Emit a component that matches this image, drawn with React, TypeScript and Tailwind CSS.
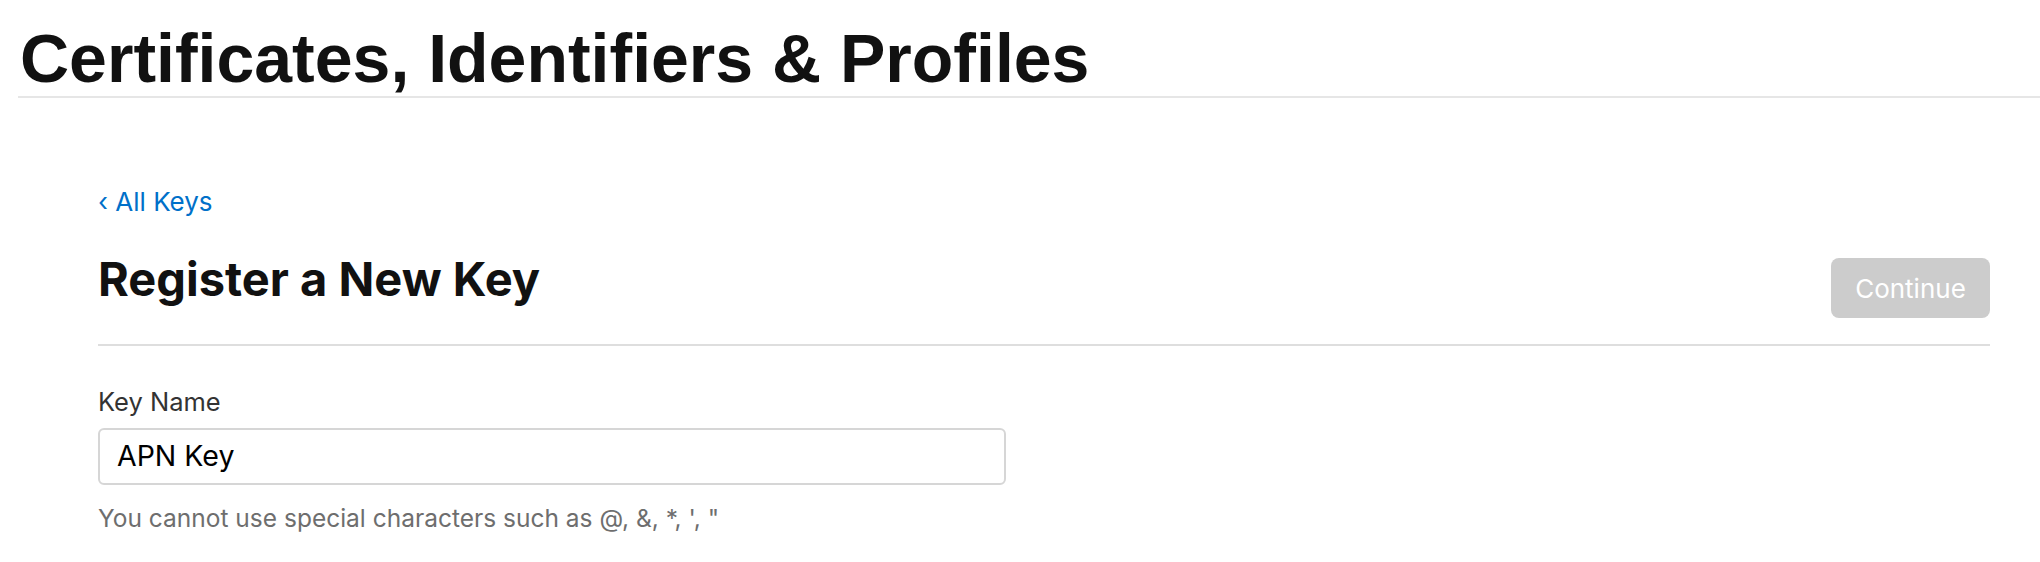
export default function App() {
  return (
    <div className="w-[2040px] h-[562px] bg-white overflow-hidden">
      <header className="pl-[18px]">
        <h1 className="pt-[24px] pl-[2px] text-[68px] leading-[68px] font-bold text-[#111111] font-['Liberation_Sans',Arial,sans-serif]">
          Certificates, Identifiers &amp; Profiles
        </h1>
        <div className="mt-[4px] h-[2px] bg-[#e6e6e6]" />
      </header>

      <main className="pl-[98px] pr-[50px] font-['Inter','Noto_Sans',sans-serif]">
        <a href="#" className="mt-[91px] block w-fit text-[26px] leading-[26px] text-[#0070c9]">
          ‹ All Keys
        </a>

        <div className="mt-[40px] flex items-start justify-between">
          <h2 className="text-[47px] leading-[47px] font-bold text-[#111111]">
            Register a New Key
          </h2>
          <button
            disabled
            className="mt-[3px] h-[60px] w-[159px] rounded-[8px] bg-[#cccccc] text-[26px] text-white"
          >
            Continue
          </button>
        </div>

        <div className="mt-[26px] h-[2px] bg-[#dedede]" />

        <label className="mt-[43px] block text-[25.5px] leading-[25px] text-[#333333]">
          Key Name
        </label>
        <div className="mt-[14px] flex h-[57px] w-[908px] items-center rounded-[6px] border-2 border-[#d6d6d6] pl-[17px] text-[28.5px] text-black">
          APN Key
        </div>
        <p className="mt-[21px] text-[24.5px] leading-[25px] text-[#6e6e6e]">
          You cannot use special characters such as @, &amp;, *, ', "
        </p>
      </main>
    </div>
  );
}
